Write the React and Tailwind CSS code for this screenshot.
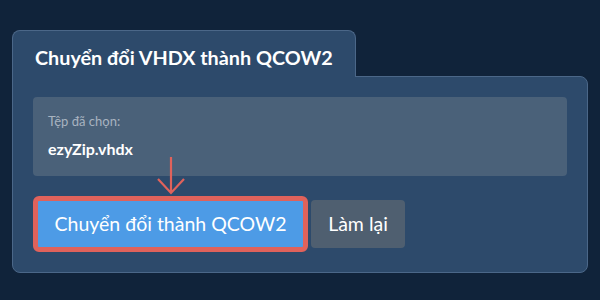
const App = () => {
  return (
    <div className="w-[600px] h-[300px] bg-[#10233a] px-3 pt-[30px] font-['Lato','Noto_Sans',sans-serif] text-white">
      {/* Tab */}
      <div className="relative z-10 -mb-px w-[344px] h-[47px] rounded-t-lg border border-b-0 border-[#4b6788] bg-[#2d4a6b] pl-[22px] pt-[14px]">
        <h1 className="text-[19.8px] leading-[24px] font-bold">Chuyển đổi VHDX thành QCOW2</h1>
      </div>

      {/* Panel */}
      <div className="relative w-[576px] h-[197px] rounded-b-lg rounded-tr-lg border border-[#4b6788] bg-[#2d4a6b] p-5">
        <div className="h-[79px] rounded bg-[#4a6179] px-[15px] pt-[16px]">
          <p className="text-[13px] leading-[16px] text-[#a8b3c0]">Tệp đã chọn:</p>
          <p className="mt-[10px] text-[16px] leading-[19px] font-bold">ezyZip.vhdx</p>
        </div>

        {/* highlight arrow */}
        <svg className="absolute left-[143px] top-[80px]" width="30" height="38" viewBox="0 0 30 38" fill="none">
          <path d="M15 0 V36 M2 22 L15 36 L28 22" stroke="#e0625b" strokeWidth="2.2" />
        </svg>

        <div className="mt-5 flex items-center">
          <button className="h-[56px] w-[275px] rounded-md border-[5px] border-[#e0625b] bg-[#4d9be6] text-[19.5px] text-white">
            Chuyển đổi thành QCOW2
          </button>
          <button className="ml-[3px] h-[48px] w-[94px] rounded bg-[#4f5f70] text-[19.5px] text-white">
            Làm lại
          </button>
        </div>
      </div>
    </div>
  );
};

export default App;
